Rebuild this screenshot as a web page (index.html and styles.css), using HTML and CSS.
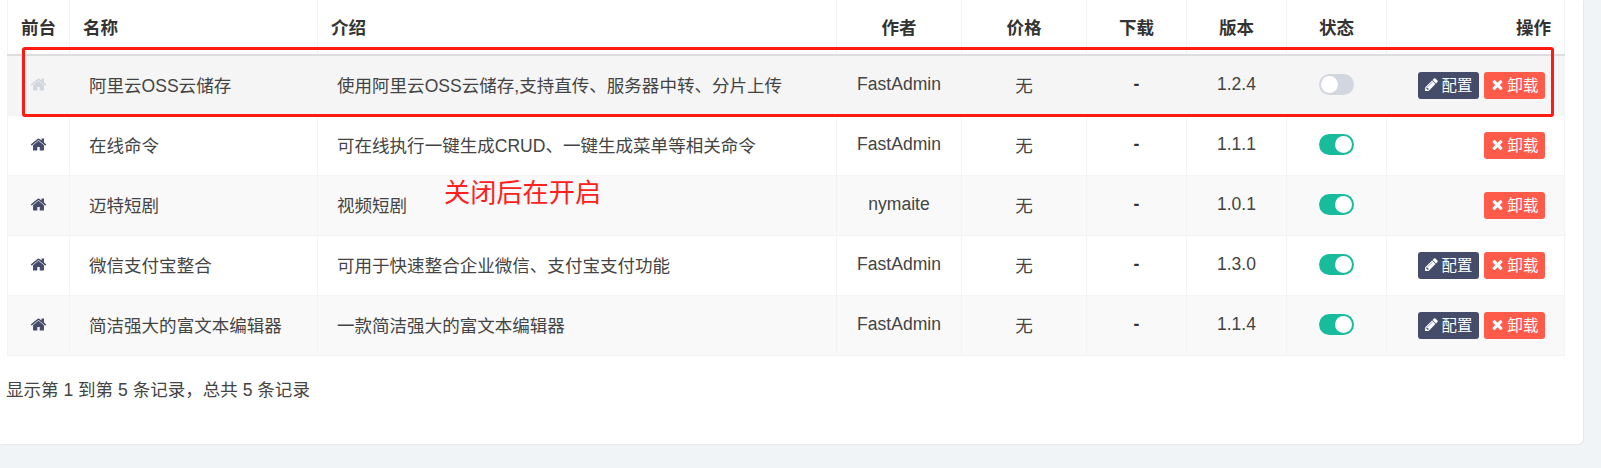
FILE: index.html
```html
<!DOCTYPE html>
<html lang="zh-CN">
<head>
<meta charset="utf-8">
<title>插件管理</title>
<link rel="stylesheet" href="styles.css">
</head>
<body>
<svg class="defs" aria-hidden="true">
  <symbol id="i-home" viewBox="0 0 1792 1792"><path d="M1472 992v480q0 26-19 45t-45 19h-384v-384h-256v384h-384q-26 0-45-19t-19-45v-480q0-1 .5-3t.5-3l575-474 575 474q1 2 1 6zm223-69l-62 74q-8 9-21 11h-3q-13 0-21-7l-692-577-692 577q-12 8-24 7-13-2-21-11l-62-74q-8-10-7-23.500t11-21.500l719-599q32-26 76-26t76 26l244 204v-195q0-14 9-23t23-9h192q14 0 23 9t9 23v408l219 182q10 8 11 21.500t-7 23.500z"/></symbol>
  <symbol id="i-pencil" viewBox="0 0 1536 1792"><path d="M363 1536l91-91-235-235-91 91v107h128v128h107zm523-928q0-22-22-22-10 0-17 7l-542 542q-7 7-7 17 0 22 22 22 10 0 17-7l542-542q7-7 7-17zm-54-192l416 416-832 832h-416v-416zm683 96q0 53-37 90l-166 166-416-416 166-165q36-38 90-38 53 0 91 38l235 234q37 39 37 91z"/></symbol>
  <symbol id="i-times" viewBox="0 0 1408 1792"><path d="M1298 1322q0 40-28 68l-136 136q-28 28-68 28t-68-28l-294-294-294 294q-28 28-68 28t-68-28l-136-136q-28-28-28-68t28-68l294-294-294-294q-28-28-28-68t28-68l136-136q28-28 68-28t68 28l294 294 294-294q28-28 68-28t68 28l136 136q28 28 28 68t-28 68l-294 294 294 294q28 28 28 68z"/></symbol>
</svg>
<main class="card">
  <table class="grid">
    <colgroup>
      <col class="c-front"><col class="c-name"><col class="c-intro"><col class="c-author"><col class="c-price"><col class="c-down"><col class="c-ver"><col class="c-state"><col class="c-ops">
    </colgroup>
    <thead>
      <tr>
        <th class="mid">前台</th><th>名称</th><th>介绍</th><th class="mid">作者</th><th class="mid">价格</th><th class="mid">下载</th><th class="mid">版本</th><th class="mid">状态</th><th class="end">操作</th>
      </tr>
    </thead>
    <tbody>
      <tr class="hover">
        <td class="mid"><svg class="home off"><use href="#i-home"/></svg></td>
        <td>阿里云OSS云储存</td>
        <td>使用阿里云OSS云储存,支持直传、服务器中转、分片上传</td>
        <td class="mid">FastAdmin</td><td class="mid">无</td><td class="mid dash">-</td><td class="mid">1.2.4</td>
        <td class="mid"><span class="toggle off"></span></td>
        <td class="end"><a class="btn cfg"><svg class="ico"><use href="#i-pencil"/></svg>配置</a><a class="btn del"><svg class="ico"><use href="#i-times"/></svg>卸载</a></td>
      </tr>
      <tr>
        <td class="mid"><svg class="home"><use href="#i-home"/></svg></td>
        <td>在线命令</td>
        <td>可在线执行一键生成CRUD、一键生成菜单等相关命令</td>
        <td class="mid">FastAdmin</td><td class="mid">无</td><td class="mid dash">-</td><td class="mid">1.1.1</td>
        <td class="mid"><span class="toggle"></span></td>
        <td class="end"><a class="btn del"><svg class="ico"><use href="#i-times"/></svg>卸载</a></td>
      </tr>
      <tr class="stripe">
        <td class="mid"><svg class="home"><use href="#i-home"/></svg></td>
        <td>迈特短剧</td>
        <td>视频短剧</td>
        <td class="mid">nymaite</td><td class="mid">无</td><td class="mid dash">-</td><td class="mid">1.0.1</td>
        <td class="mid"><span class="toggle"></span></td>
        <td class="end"><a class="btn del"><svg class="ico"><use href="#i-times"/></svg>卸载</a></td>
      </tr>
      <tr>
        <td class="mid"><svg class="home"><use href="#i-home"/></svg></td>
        <td>微信支付宝整合</td>
        <td>可用于快速整合企业微信、支付宝支付功能</td>
        <td class="mid">FastAdmin</td><td class="mid">无</td><td class="mid dash">-</td><td class="mid">1.3.0</td>
        <td class="mid"><span class="toggle"></span></td>
        <td class="end"><a class="btn cfg"><svg class="ico"><use href="#i-pencil"/></svg>配置</a><a class="btn del"><svg class="ico"><use href="#i-times"/></svg>卸载</a></td>
      </tr>
      <tr class="stripe">
        <td class="mid"><svg class="home"><use href="#i-home"/></svg></td>
        <td>简洁强大的富文本编辑器</td>
        <td>一款简洁强大的富文本编辑器</td>
        <td class="mid">FastAdmin</td><td class="mid">无</td><td class="mid dash">-</td><td class="mid">1.1.4</td>
        <td class="mid"><span class="toggle"></span></td>
        <td class="end"><a class="btn cfg"><svg class="ico"><use href="#i-pencil"/></svg>配置</a><a class="btn del"><svg class="ico"><use href="#i-times"/></svg>卸载</a></td>
      </tr>
    </tbody>
  </table>
  <p class="summary">显示第 1 到第 5 条记录，总共 5 条记录</p>
  <div class="mark-box"></div>
  <div class="mark-text">关闭后在开启</div>
</main>
</body>
</html>
```
FILE: styles.css
```css
* { box-sizing: border-box; }
html, body { margin: 0; height: 100%; overflow: hidden; }
body {
  background: #f1f4f6;
  font-family: "Liberation Sans", "Noto Sans CJK SC", sans-serif;
  font-size: 17.55px;
  color: #444;
}
.defs { display: none; }
.card {
  position: relative;
  width: 1583px;
  height: 444px;
  padding: 0 18px 0 7px;
  background: #fff;
  border-bottom-right-radius: 5px;
  box-shadow: 1px 1px 1px rgba(0, 0, 0, .05);
}
.grid { width: 1557px; table-layout: fixed; border-collapse: collapse; }
.c-front { width: 62px; }
.c-name { width: 248px; }
.c-intro { width: 519px; }
.c-author { width: 125px; }
.c-price { width: 125px; }
.c-down { width: 100px; }
.c-ver { width: 100px; }
.c-state { width: 100px; }
.c-ops { width: 178px; }
th, td { border: 1px solid #f4f4f4; white-space: nowrap; text-align: left; vertical-align: middle; }
th { height: 55px; padding: 0 13px 1px; border-top: 0; border-bottom: 2px solid #ddd; color: #333; font-weight: 700; }
td { height: 60px; padding: 0 19px 2px; }
th.mid, td.mid { padding-left: 0; padding-right: 0; text-align: center; }
th.end, td.end { text-align: right; }
td.end { font-size: 0; padding-right: 19px; padding-bottom: 0; }
td.dash { font-weight: 700; color: #333; }
.hover td { background: #f5f5f5; }
.stripe td { background: #f9f9f9; }
.home { display: block; width: 17px; height: 17px; margin: 0 auto; fill: #444c69; }
.home.off { fill: #d2d6de; }
.toggle {
  position: relative;
  display: inline-block;
  width: 35px;
  height: 21px;
  border-radius: 11px;
  background: #18bc9c;
  vertical-align: middle;
}
.toggle::after {
  content: "";
  position: absolute;
  top: 2px;
  right: 2px;
  width: 17px;
  height: 17px;
  border-radius: 50%;
  background: #fff;
}
.toggle.off { background: #d2d6de; }
.toggle.off::after { right: auto; left: 2px; }
.btn {
  display: inline-flex;
  align-items: center;
  justify-content: center;
  gap: 4px;
  width: 61px;
  height: 27px;
  margin-left: 5px;
  padding-bottom: 2px;
  border-radius: 3px;
  color: #fff;
  font-size: 15.4px;
  vertical-align: middle;
}
.cfg { background: #444c69; }
.del { background: #ff5b4b; }
.ico { width: 13px; height: 15px; fill: #fff; }
.summary { margin: 22px 0 0 -1px; line-height: 24px; }
.mark-box {
  position: absolute;
  left: 22px;
  top: 47px;
  width: 1532px;
  height: 70px;
  border: 3px solid #ff1a12;
  border-radius: 3px;
}
.mark-text {
  position: absolute;
  left: 444px;
  top: 176px;
  color: #ff2020;
  font-size: 26.2px;
  line-height: 34px;
}
```
